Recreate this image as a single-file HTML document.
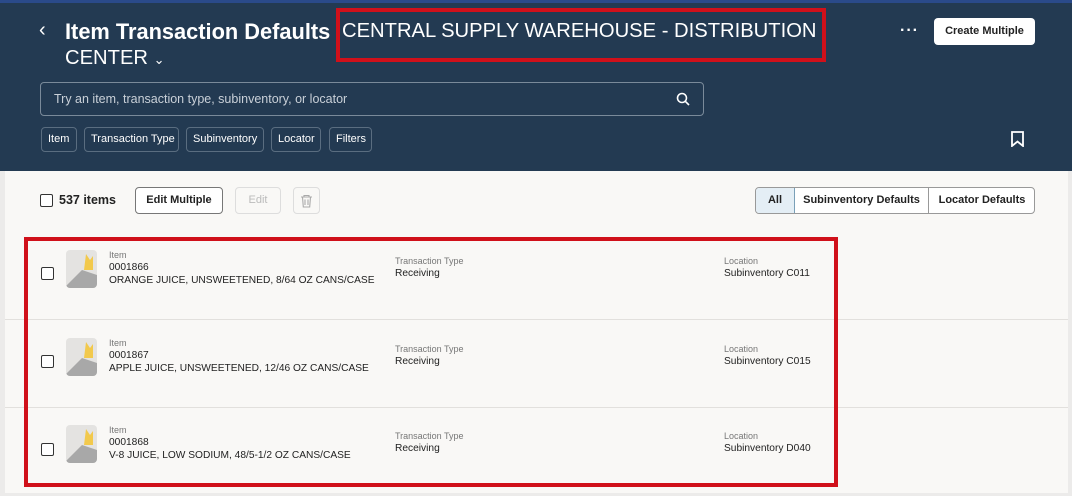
<!DOCTYPE html>
<html><head><style>
*{box-sizing:border-box;margin:0;padding:0}
body{width:1072px;height:493px;overflow:hidden;background:#ecebea;font-family:"Liberation Sans",sans-serif;position:relative}
.hdr{position:absolute;left:0;top:0;width:1072px;height:171px;background:#233a52;border-top:3px solid #2a4a8a}
.abs{position:absolute}
.w{color:#fff}
.chip{position:absolute;top:127px;height:25px;border:1px solid #5a6d80;border-radius:4px;color:#fff;font-size:11px;line-height:23px;padding:0 6px;white-space:nowrap}
.panel{position:absolute;left:5px;top:171px;width:1063px;height:322px;background:#f9f8f6}
.btn{position:absolute;border:1px solid #8a8a8a;border-radius:4px;background:#fff;font-size:11px;font-weight:bold;color:#222;text-align:center}
.row{position:absolute;left:5px;width:1063px;height:88px;border-bottom:1px solid #e2e0dd}
.cb{position:absolute;width:13px;height:13px;border:1.5px solid #333;border-radius:2px;background:#fff}
.lbl{font-size:9px;color:#777;line-height:11px}
.val{font-size:10.2px;color:#222;line-height:13px}
.thumb{position:absolute;left:66px;width:31px;height:38px;background:#e4e3e1;border-radius:4px;overflow:hidden}
</style></head><body>
<div class="hdr"></div>
<div class="abs w" style="left:39px;top:19px;font-size:20px">&#8249;</div>
<div class="abs w" style="left:65px;top:19px;font-size:21.8px;font-weight:bold">Item Transaction Defaults</div>
<div class="abs w" style="left:342px;top:20px;font-size:20.2px">CENTRAL SUPPLY WAREHOUSE - DISTRIBUTION</div>
<div class="abs w" style="left:65px;top:47px;font-size:20.2px">CENTER <span style="font-size:13px">&#8964;</span></div>
<div class="abs" style="left:336px;top:8px;width:490px;height:54px;border:4px solid #d0101a"></div>
<div class="abs w" style="left:900px;top:22px;font-size:16px;font-weight:bold;letter-spacing:1px">···</div>
<div class="btn" style="left:934px;top:18px;width:101px;height:27px;line-height:26px;border:none">Create Multiple</div>
<div class="abs" style="left:40px;top:82px;width:664px;height:34px;border:1px solid #7a8a9a;border-radius:4px;color:#c9d0d8;font-size:12.5px;line-height:32px;padding-left:13px">Try an item, transaction type, subinventory, or locator</div>
<svg class="abs" style="left:676px;top:92px" width="14" height="14"><circle cx="6" cy="6" r="4.5" fill="none" stroke="#fff" stroke-width="1.6"/><line x1="9.3" y1="9.3" x2="13" y2="13" stroke="#fff" stroke-width="1.6"/></svg>
<div class="chip" style="left:41px;width:36px">Item</div>
<div class="chip" style="left:84px;width:95px">Transaction Type</div>
<div class="chip" style="left:186px;width:78px">Subinventory</div>
<div class="chip" style="left:271px;width:50px">Locator</div>
<div class="chip" style="left:329px;width:43px">Filters</div>
<svg class="abs" style="left:1010px;top:131px" width="15" height="16"><path d="M2 1H13V15L7.5 10.5L2 15Z" fill="none" stroke="#fff" stroke-width="1.8"/></svg>
<div class="panel"></div>
<div class="cb" style="left:40px;top:194px"></div>
<div class="abs" style="left:59px;top:193px;font-size:12.5px;color:#222;font-weight:600">537 items</div>
<div class="btn" style="left:135px;top:187px;width:88px;height:27px;line-height:25px;border-color:#777">Edit Multiple</div>
<div class="btn" style="left:235px;top:187px;width:46px;height:27px;line-height:25px;border-color:#ddd;color:#bbb;font-weight:normal;background:#f9f8f6">Edit</div>
<div class="btn" style="left:293px;top:187px;width:27px;height:27px;border-color:#ddd;background:#f9f8f6"><svg width="13" height="14" style="margin-top:6px"><path d="M1 3H12M4 3V1.5H9V3M2.5 3L3.3 13H9.7L10.5 3M5 5.5V11M8 5.5V11" fill="none" stroke="#aaa" stroke-width="1.1"/></svg></div>
<div class="abs" style="left:755px;top:187px;width:280px;height:27px;border:1px solid #999;border-radius:4px;background:#fff;font-size:11px;font-weight:bold;color:#222;line-height:25px">
<span class="abs" style="left:0;top:0;width:39px;height:25px;background:#e4eef5;border-right:1px solid #7aa0b8;text-align:center;border-radius:3px 0 0 3px">All</span>
<span class="abs" style="left:39px;top:0;width:134px;text-align:center;border-right:1px solid #999;height:25px">Subinventory Defaults</span>
<span class="abs" style="left:173px;top:0;width:106px;text-align:center">Locator Defaults</span></div>

<div class="row" style="top:232px"></div>
<div class="row" style="top:320px"></div>
<div class="row" style="top:408px;border:none"></div>

<div class="cb" style="left:41px;top:267px"></div>
<div class="thumb" style="top:250px"><svg width="31" height="38"><path d="M0 36L16 20L31 25V38H0Z" fill="#a8a8a8"/><path d="M20 4L24 10L27 6V20L18 20Z" fill="#f2c94c"/></svg></div>
<div class="abs" style="left:109px;top:250px"><div class="lbl">Item</div><div class="val">0001866</div><div class="val">ORANGE JUICE, UNSWEETENED, 8/64 OZ CANS/CASE</div></div>
<div class="abs" style="left:395px;top:256px"><div class="lbl">Transaction Type</div><div class="val">Receiving</div></div>
<div class="abs" style="left:724px;top:256px"><div class="lbl">Location</div><div class="val">Subinventory C011</div></div>

<div class="cb" style="left:41px;top:355px"></div>
<div class="thumb" style="top:338px"><svg width="31" height="38"><path d="M0 36L16 20L31 25V38H0Z" fill="#a8a8a8"/><path d="M20 4L24 10L27 6V20L18 20Z" fill="#f2c94c"/></svg></div>
<div class="abs" style="left:109px;top:338px"><div class="lbl">Item</div><div class="val">0001867</div><div class="val">APPLE JUICE, UNSWEETENED, 12/46 OZ CANS/CASE</div></div>
<div class="abs" style="left:395px;top:344px"><div class="lbl">Transaction Type</div><div class="val">Receiving</div></div>
<div class="abs" style="left:724px;top:344px"><div class="lbl">Location</div><div class="val">Subinventory C015</div></div>

<div class="cb" style="left:41px;top:443px"></div>
<div class="thumb" style="top:425px"><svg width="31" height="38"><path d="M0 36L16 20L31 25V38H0Z" fill="#a8a8a8"/><path d="M20 4L24 10L27 6V20L18 20Z" fill="#f2c94c"/></svg></div>
<div class="abs" style="left:109px;top:425px"><div class="lbl">Item</div><div class="val">0001868</div><div class="val">V-8 JUICE, LOW SODIUM, 48/5-1/2 OZ CANS/CASE</div></div>
<div class="abs" style="left:395px;top:431px"><div class="lbl">Transaction Type</div><div class="val">Receiving</div></div>
<div class="abs" style="left:724px;top:431px"><div class="lbl">Location</div><div class="val">Subinventory D040</div></div>

<div class="abs" style="left:24px;top:237px;width:814px;height:250px;border:4px solid #d0101a"></div>
</body></html>
